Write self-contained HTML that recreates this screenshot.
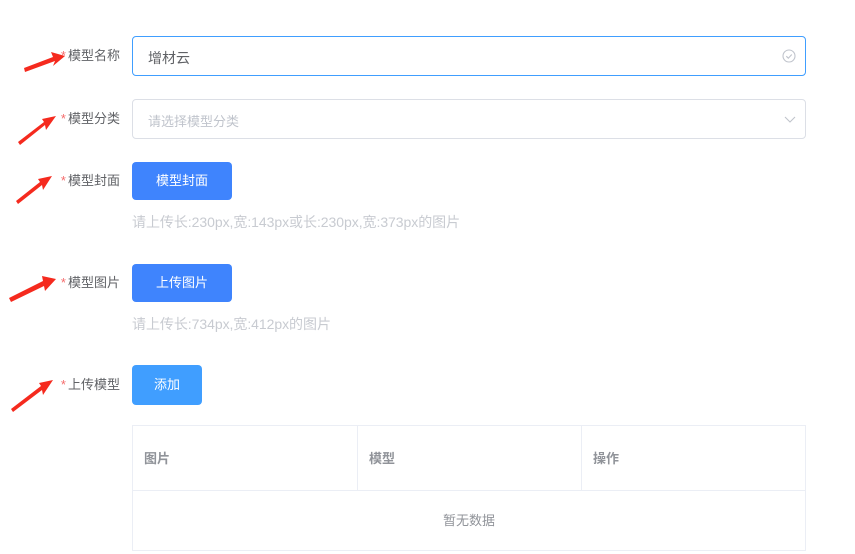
<!DOCTYPE html>
<html><head><meta charset="utf-8"><style>
body{margin:0;width:855px;height:554px;background:#fff;position:relative;overflow:hidden;font-family:"Liberation Sans","Noto Sans CJK SC",sans-serif;}
.lbl{position:absolute;right:735px;font-size:13px;color:#606266;white-space:nowrap;line-height:16px}
.lbl b{color:#f56c6c;font-weight:normal;margin-right:2px}
.inp{position:absolute;left:132px;width:672px;height:38px;border:1px solid #dcdfe6;border-radius:4px;box-sizing:content-box}
.btn{position:absolute;left:132px;color:#fff;font-size:13px;text-align:center;border-radius:4px}
.hint{position:absolute;left:132px;font-size:14px;color:#c8cbd1;letter-spacing:-0.05px}
.tb{position:absolute;left:132px;top:425px;width:672px;height:124px;border:1px solid #ebeef5}
.th{position:absolute;top:0;height:64px;border-bottom:1px solid #ebeef5;width:100%}
.th div{position:absolute;top:0;height:64px;line-height:66px;font-size:13px;font-weight:bold;color:#909399;padding-left:11px;box-sizing:border-box}
</style></head><body>
<svg width="855" height="554" style="position:absolute;left:0;top:0">
<g fill="#f52a1e">
<polygon points="25,72 55,61 53,66 65,56 51,52 53,57 24,68"/>
<polygon points="20,145 45,125 46,130 56,116 42,119 44,122 18,142"/>
<polygon points="18,204 42,185 43,190 52,176 38,179 40,182 16,201"/>
<polygon points="11,302 44,286 45,291 56,279 42,276 43,281 9,298"/>
<polygon points="13,412 42,390 43,395 53,380 39,383 41,386 11,409"/>
</g>
</svg>
<div class="lbl" style="top:48px"><b>*</b>模型名称</div>
<div class="lbl" style="top:111px"><b>*</b>模型分类</div>
<div class="lbl" style="top:173px"><b>*</b>模型封面</div>
<div class="lbl" style="top:275px"><b>*</b>模型图片</div>
<div class="lbl" style="top:377px"><b>*</b>上传模型</div>

<div class="inp" style="top:36px;border-color:#409eff">
<span style="position:absolute;left:15px;top:11px;font-size:14px;color:#606266">增材云</span>
<svg style="position:absolute;right:9px;top:12px" width="14" height="14" viewBox="0 0 14 14"><circle cx="7" cy="7" r="6" fill="none" stroke="#c0c4cc" stroke-width="1.1"/><path d="M4.3 7.2l2 2 3.5-3.7" fill="none" stroke="#c0c4cc" stroke-width="1.1"/></svg>
</div>
<div class="inp" style="top:99px">
<span style="position:absolute;left:15px;top:11px;font-size:13px;color:#c0c4cc">请选择模型分类</span>
<svg style="position:absolute;right:9px;top:14px" width="12" height="10" viewBox="0 0 12 10"><path d="M1 3l5 5 5-5" fill="none" stroke="#c0c4cc" stroke-width="1.1"/></svg>
</div>

<div class="btn" style="top:162px;width:100px;height:38px;line-height:38px;background:#3f84fd">模型封面</div>
<div class="hint" style="top:212px">请上传长:230px,宽:143px或长:230px,宽:373px的图片</div>
<div class="btn" style="top:264px;width:100px;height:38px;line-height:38px;background:#3f84fd">上传图片</div>
<div class="hint" style="top:314px">请上传长:734px,宽:412px的图片</div>
<div class="btn" style="top:365px;width:70px;height:40px;line-height:40px;background:#409eff">添加</div>

<div class="tb">
<div class="th">
<div style="left:0;width:225px;border-right:1px solid #ebeef5">图片</div>
<div style="left:225px;width:224px;border-right:1px solid #ebeef5">模型</div>
<div style="left:449px;width:223px">操作</div>
</div>
<div style="position:absolute;top:65px;left:0;width:100%;height:59px;line-height:59px;text-align:center;font-size:13px;color:#909399">暂无数据</div>
</div>
</body></html>
